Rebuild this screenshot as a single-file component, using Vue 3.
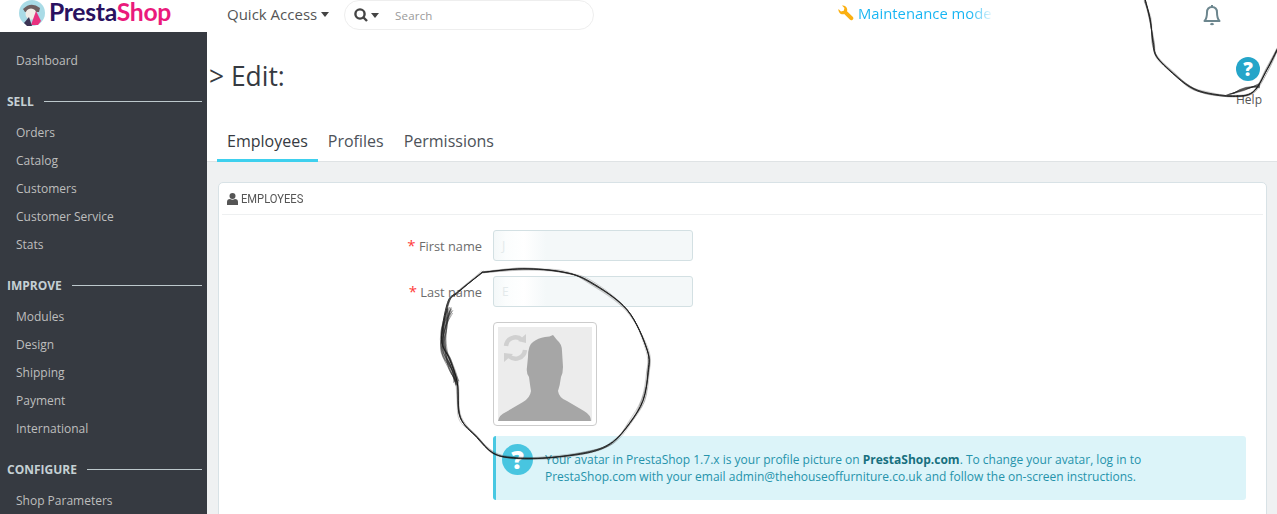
<script setup>
const groups = [
  { items: ['Dashboard'] },
  { title: 'SELL', items: ['Orders', 'Catalog', 'Customers', 'Customer Service', 'Stats'] },
  { title: 'IMPROVE', items: ['Modules', 'Design', 'Shipping', 'Payment', 'International'] },
  { title: 'CONFIGURE', items: ['Shop Parameters'] },
]
const tabs = ['Employees', 'Profiles', 'Permissions']

const ring = [[483,272],[523,269],[563,272],[590,282],[627,310],[647,350],[648,373],[643,400],[630,423],[613,442],[590,452],[547,458],[513,458],[493,453],[477,437],[460,417],[457,383],[450,360],[442,340],[448,303],[458,292],[483,272]]
const arc = [[1145,0],[1150,20],[1153,43],[1157,57],[1173,73],[1190,87],[1207,93],[1233,96],[1253,92],[1267,70],[1278,48]]

let seed = 7
const rnd = () => { seed = (seed * 16807) % 2147483647; return seed / 2147483647 }
function strand(pts, amp) {
  const p = pts.map(([x, y]) => [x + (rnd() - 0.5) * amp, y + (rnd() - 0.5) * amp])
  let d = `M${p[0][0].toFixed(1)} ${p[0][1].toFixed(1)}`
  for (let i = 0; i < p.length - 1; i++) {
    const a = p[Math.max(i - 1, 0)], b = p[i], c = p[i + 1], e = p[Math.min(i + 2, p.length - 1)]
    d += ` C${(b[0] + (c[0] - a[0]) / 6).toFixed(1)} ${(b[1] + (c[1] - a[1]) / 6).toFixed(1)} ${(c[0] - (e[0] - b[0]) / 6).toFixed(1)} ${(c[1] - (e[1] - b[1]) / 6).toFixed(1)} ${c[0].toFixed(1)} ${c[1].toFixed(1)}`
  }
  return d
}
const strands = []
for (let i = 0; i < 8; i++) {
  strands.push(strand(ring, i < 2 ? 1 : 3))
  strands.push(strand(arc, i < 2 ? 1 : 2.6))
}
const knot = []
for (let i = 0; i < 16; i++) knot.push(strand([[450,310],[444,328],[444,350],[451,370],[456,384]], 6))
for (let i = 0; i < 9; i++) knot.push(`M${1226 + i} ${95 - i * 0.2} Q1245 ${92 - i} 1260 ${83 + i * 0.6}`)
</script>

<template>
  <div class="page">
    <header class="top">
      <div class="logo">
        <svg class="bird" width="28" height="26" viewBox="0 0 28 26">
          <circle cx="14" cy="13" r="13" fill="#a9dbe6" />
          <path d="M5 9 Q13 1 22 8 L21 12 L7 12 Z" fill="#6e5f60" />
          <circle cx="13" cy="14" r="5.5" fill="#f1ece6" />
          <path d="M13 25 L18 11 L23 21 L20 25 Z" fill="#e8317f" />
          <path d="M6 23 L11 17 L14 26 L9 26 Z" fill="#3c3454" />
        </svg>
        <span class="brand"><span class="presta">Presta</span><span class="shop">Shop</span></span>
      </div>
      <div class="quick">Quick Access <i class="caret"></i></div>
      <div class="search">
        <svg width="14" height="14" viewBox="0 0 14 14" fill="none" stroke="#444" stroke-width="2.4">
          <circle cx="6" cy="6" r="4.6" /><path d="M9 9 L13 13" />
        </svg>
        <i class="caret small"></i>
        <span class="ph">Search</span>
      </div>
      <div class="maint">
        <svg width="16" height="16" viewBox="0 0 16 16">
          <path d="M.5 4 A4.4 4.4 0 0 0 6.2 9 L11.8 14.6 A2 2 0 0 0 14.7 11.8 L9 6.2 A4.4 4.4 0 0 0 4 .5 L6.4 3 L5.8 5.8 L3 6.4 Z" fill="#fbb012" />
        </svg>
        <span class="mt">Maintenance mode</span>
      </div>
      <svg class="bell" width="18" height="22" viewBox="0 0 18 22" fill="none" stroke="#6c868e" stroke-width="2">
        <path d="M1.5 17 C3.5 15 4 12 4 8.5 C4 5 6 3 9 3 C12 3 14 5 14 8.5 C14 12 14.5 15 16.5 17 Z" stroke-linejoin="round" />
        <path d="M7.5 19.5 Q9 21 10.5 19.5" /><path d="M9 1 L9 3" />
      </svg>
    </header>

    <div class="body">
      <nav class="side">
        <div v-for="(g, i) in groups" :key="i" class="group">
          <div v-if="g.title" class="gtitle"><span>{{ g.title }}</span><i></i></div>
          <a v-for="it in g.items" :key="it" class="item">{{ it }}</a>
        </div>
      </nav>

      <main class="main">
        <div class="headbar">
          <div class="titlerow">
            <h1>&gt; Edit:</h1>
            <div class="help">
              <span class="helpicon">?</span>
              <span class="helptxt">Help</span>
            </div>
          </div>
          <div class="tabs">
            <a v-for="(t, i) in tabs" :key="t" class="tab" :class="{ active: i === 0 }">{{ t }}</a>
          </div>
        </div>

        <section class="content">
          <div class="card">
            <div class="cardhead">
              <svg width="11" height="12" viewBox="0 0 11 12" fill="#555">
                <circle cx="5.5" cy="3" r="3" /><path d="M0 12 V9 Q0 6.2 3 6 Q5.5 7.6 8 6 Q11 6.2 11 9 V12 Z" />
              </svg>
              <span>EMPLOYEES</span>
            </div>
            <div class="form">
              <div class="row">
                <label><b>*</b> First name</label>
                <div class="input"><span class="ghost">J</span></div>
              </div>
              <div class="row">
                <label><b>*</b> Last name</label>
                <div class="input"><span class="ghost">E</span></div>
              </div>
              <div class="row avatar-row">
                <div class="avatar">
                  <svg width="94" height="94" viewBox="0 0 94 94">
                    <rect width="94" height="94" fill="#ececec" />
                    <path d="M0 94 Q1 88 8 85 L25 75 Q32 71 33 64 Q32 58 31 50 Q28 46 29 40 L30 30 Q30 18 35 15 Q40 11 47 10 Q52 10 55 8 L59 13 Q64 17 64 24 L65 40 Q65 46 63 50 Q62 58 60 64 Q61 71 69 74 L86 84 Q93 88 93 94 Z" fill="#a6a6a6" />
                    <g fill="none" stroke="#d0d0d0" stroke-width="4.4">
                      <path d="M8 19 A9.5 9.5 0 0 1 24 13" />
                      <path d="M27 23 A9.5 9.5 0 0 1 11 29" />
                    </g>
                    <path d="M20 14 L28 7 L28 16 Z M6 26 L15 27 L6 35 Z" fill="#d0d0d0" />
                  </svg>
                </div>
              </div>
              <div class="alert">
                <span class="alerticon">?</span>
                <p>Your avatar in PrestaShop 1.7.x is your profile picture on <strong>PrestaShop.com</strong>. To change your avatar, log in to PrestaShop.com with your email admin@thehouseoffurniture.co.uk and follow the on-screen instructions.</p>
              </div>
            </div>
          </div>
        </section>
      </main>
    </div>

    <svg class="scribble" width="1277" height="514" viewBox="0 0 1277 514" fill="none">
      <path v-for="(d, i) in strands" :key="i" :d="d" :stroke="i < 4 ? '#000' : '#333'" :stroke-width="i < 4 ? 0.9 : 0.5" :opacity="i < 4 ? 0.9 : 0.45" />
      <path v-for="(d, i) in knot" :key="'k' + i" :d="d" stroke="#222" stroke-width="0.6" opacity="0.65" />
    </svg>
  </div>
</template>

<style>
html, body { margin: 0; padding: 0; background: #fff; overflow: hidden; }
</style>

<style scoped>
.page {
  position: relative;
  width: 1277px;
  height: 514px;
  overflow: hidden;
  font-family: "Open Sans", sans-serif;
  color: #363a41;
  background: #fff;
}
.top {
  height: 32px;
  display: flex;
  align-items: center;
  background: #fff;
}
.logo { width: 227px; display: flex; align-items: center; padding-left: 18px; box-sizing: border-box; height: 26px; margin-top: -6px; flex: none; }
.bird { flex: none; margin-right: 3px; }
.brand { font-family: "Lato", sans-serif; font-weight: 700; font-size: 24.7px; letter-spacing: -0.3px; line-height: 26px; white-space: nowrap; position: relative; top: -1px; }
.presta { color: #2a1160; }
.shop { color: #ea1a7c; }
.quick { width: 117px; flex: none; font-size: 15px; color: #555; margin-top: -4px; display: flex; align-items: center; gap: 4px; white-space: nowrap; }
.caret { display: inline-block; width: 0; height: 0; border: 4px solid transparent; border-top: 5px solid #444; border-bottom: 0; }
.caret.small { margin-left: 3px; }
.search {
  width: 250px;
  height: 30px;
  box-sizing: border-box;
  border: 1px solid #eee;
  border-radius: 15px;
  display: flex;
  align-items: center;
  padding-left: 9px;
  margin-top: -2px;
  flex: none;
}
.ph { font-size: 11.5px; color: #9a9a9a; margin-left: 16px; letter-spacing: .2px; }
.maint { margin-left: 244px; display: flex; align-items: center; gap: 4px; margin-top: -7px; width: 155px; white-space: nowrap; flex: none; }
.mt {
  font-size: 14.8px;
  background: linear-gradient(90deg, #14b4f2 0, #14b4f2 112px, #fff 136px);
  -webkit-background-clip: text;
  background-clip: text;
  color: transparent;
}
.bell { margin-left: 210px; margin-top: -3px; flex: none; }
.body { display: flex; height: 482px; }
.side { width: 207px; flex: none; background: #363a41; padding-top: 15px; box-sizing: border-box; overflow: hidden; }
.group { padding-bottom: 10px; }
.item { display: block; height: 28px; line-height: 28px; padding-left: 16px; font-size: 12px; color: #bebebe; }
.gtitle { display: flex; align-items: center; height: 34px; padding: 0 5px 2px 7px; box-sizing: border-box; font-size: 12px; font-weight: 700; color: #c5d0d4; gap: 10px; }
.gtitle i { flex: 1; height: 1px; background: #bdc8cc; }
.main { flex: 1; min-width: 0; display: flex; flex-direction: column; }
.headbar { background: #fff; height: 130px; border-bottom: 1px solid #dfe3e5; box-sizing: border-box; display: flex; flex-direction: column; flex: none; }
.titlerow { height: 93px; display: flex; justify-content: space-between; padding-left: 2px; box-sizing: border-box; flex: none; }
h1 { margin: 25px 0 0; font-size: 26.4px; font-weight: 400; line-height: 38px; color: #363a41; }
.help { width: 58px; display: flex; flex-direction: column; align-items: center; padding-top: 25px; box-sizing: border-box; }
.helpicon { width: 24px; height: 24px; border-radius: 50%; background: #25a5c9; color: #fff; font-weight: 800; font-size: 19px; line-height: 24px; text-align: center; }
.helptxt { font-size: 12px; color: #555; margin: 12px 0 0 2px; line-height: 14px; }
.tabs { display: flex; padding-left: 10px; height: 37px; }
.tab { padding: 4px 10px 0; font-size: 16px; line-height: 24px; color: #4d5259; box-sizing: border-box; height: 37px; }
.tab.active { border-bottom: 3px solid #3ed0ee; color: #363a41; }
.content { flex: 1; background: #eff1f2; padding: 20px 10px 0 11px; min-height: 0; }
.card { background: #fff; border: 1px solid #d8e2e6; border-radius: 5px; height: 400px; box-sizing: border-box; }
.cardhead { height: 31px; margin: 0 3px; border-bottom: 1px solid #eef0f1; display: flex; align-items: center; gap: 3px; padding-left: 5px; font-family: "Roboto", sans-serif; font-size: 13px; color: #555; }
.cardhead span { display: inline-block; transform: scaleX(.86); transform-origin: left; }
.form { padding-top: 15px; }
.row { display: flex; align-items: center; margin-bottom: 15px; height: 31px; }
label { width: 274px; text-align: right; font-size: 12.8px; color: #6c6c6c; padding: 0 11px 2px 0; box-sizing: border-box; flex: none; }
label b { font-weight: 400; font-size: 15px; color: #ff3b3b; }
.input { width: 200px; height: 31px; box-sizing: border-box; border: 1px solid #d3e0e3; background: linear-gradient(90deg, #f4f8f9 0, #fbfdfd 12px, #fff 30px, #f4f8f9 52px); border-radius: 3px; padding-left: 8px; font-size: 12px; line-height: 29px; overflow: hidden; }
.ghost { color: #e4eaeb; }
.avatar-row { height: auto; margin: 0 0 10px 274px; }
.avatar { width: 104px; height: 104px; box-sizing: border-box; border: 1px solid #ccc; border-radius: 4px; padding: 4px; display: flex; }
.alert { margin-left: 274px; width: 753px; height: 64px; box-sizing: border-box; background: #dcf4f9; border-left: 3px solid #48c8e2; border-radius: 3px; display: flex; align-items: flex-start; padding: 8px 0 0 6px; }
.alerticon { width: 31px; height: 31px; flex: none; border-radius: 50%; background: #48c5e0; color: #fff; font-weight: 800; font-size: 25px; line-height: 31px; text-align: center; }
.alert p { margin: 7px 0 0 12px; width: 640px; font-size: 12px; line-height: 17px; color: #2593ab; }
.alert strong { color: #17707f; font-weight: 700; }
.scribble { position: absolute; left: 0; top: 0; pointer-events: none; }
</style>
